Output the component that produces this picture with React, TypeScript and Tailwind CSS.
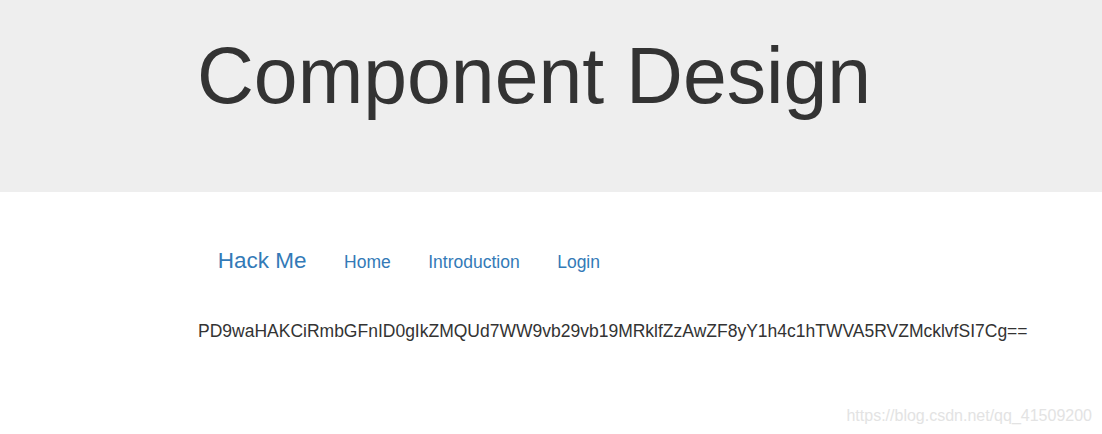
import React from "react";

export default function App() {
  const font = { fontFamily: '"Liberation Sans", Arial, sans-serif' };
  return (
    <div className="relative min-h-[434px] w-full bg-white text-[#333]" style={font}>
      <div className="h-[192px] bg-[#eeeeee]">
        <div className="pl-[197px] pt-[33px]">
          <h1 className="text-[78.75px] leading-[1.1] font-normal text-[#333]">Component Design</h1>
        </div>
      </div>
      <div className="pl-[198px]">
        <nav className="mt-[56px] flex items-baseline pl-[1px]">
          <a className="px-[18.75px] text-[22.5px] leading-[25px] text-[#337ab7]">Hack Me</a>
          <a className="px-[18.75px] text-[17.5px] leading-[25px] text-[#337ab7]">Home</a>
          <a className="px-[18.75px] text-[17.5px] leading-[25px] text-[#337ab7]">Introduction</a>
          <a className="px-[18.75px] text-[17.5px] leading-[25px] text-[#337ab7]">Login</a>
        </nav>
        <p className="mt-[44px] text-[17.5px] leading-[25px] text-[#333]">
          PD9waHAKCiRmbGFnID0gIkZMQUd7WW9vb29vb19MRklfZzAwZF8yY1h4c1hTWVA5RVZMcklvfSI7Cg==
        </p>
      </div>
      <div className="absolute right-[10px] top-[408px] text-[16px] leading-none text-[#e3e3e3]">
        https://blog.csdn.net/qq_41509200
      </div>
    </div>
  );
}
